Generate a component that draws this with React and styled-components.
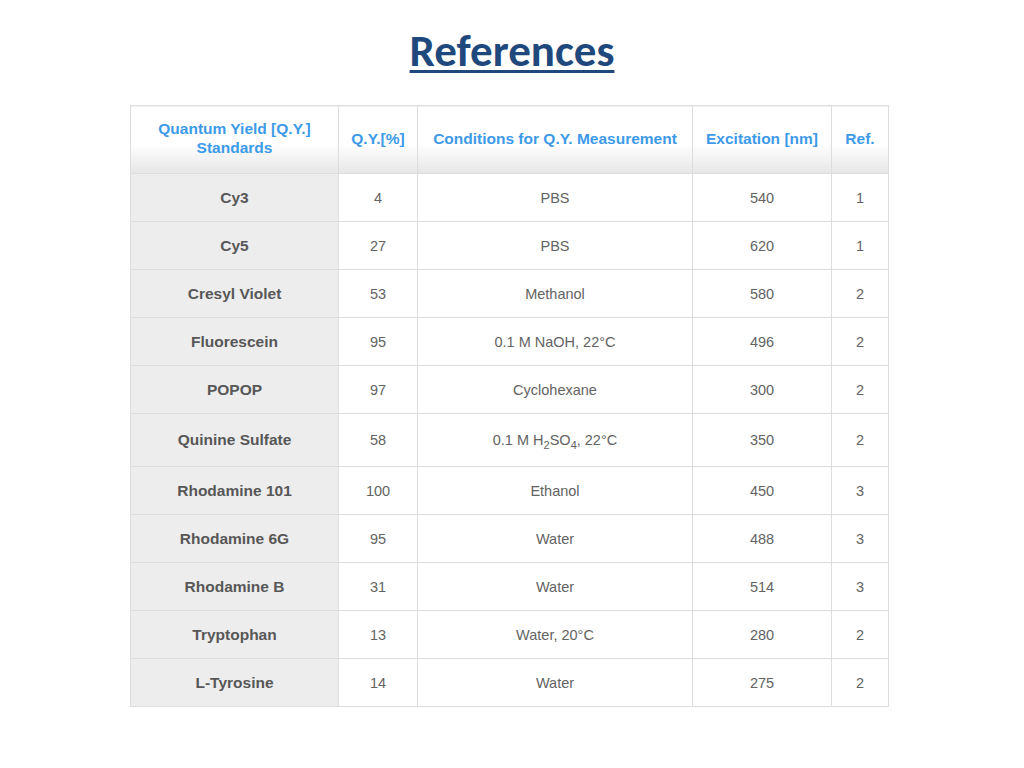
import React from 'react';
import styled, { createGlobalStyle } from 'styled-components';

const GlobalStyle = createGlobalStyle`
    html, body {
        margin: 0;
        padding: 0;
        background: #ffffff;
    }
`;

const Page = styled.div`
    width: 1024px;
    height: 768px;
    display: flex;
    flex-direction: column;
    align-items: center;
    padding-top: 24px;
    box-sizing: border-box;
`;

const Title = styled.h1`
    margin: 0 0 27px 0;
    font-family: Carlito, Lato, "Liberation Sans", sans-serif;
    font-weight: 700;
    font-size: 45px;
    line-height: 54px;
    color: #1f497d;
    text-decoration: underline;
    text-decoration-thickness: 3px;
    text-underline-offset: 4px;
`;

const Table = styled.table`
    width: 759px;
    margin-right: 5px;
    border-collapse: collapse;
    font-family: "Liberation Sans", Arial, sans-serif;
    color: #555555;
    table-layout: fixed;
`;

const HeadCell = styled.th`
    box-sizing: border-box;
    height: 68px;
    padding: 0 ${p => p.pad}px 3px;
    border: 1px solid #dddddd;
    background: linear-gradient(#ffffff 0%, #ffffff 55%, #e6e6e6 100%);
    color: #3d9ae8;
    font-size: 15.5px;
    font-weight: 700;
    line-height: 19px;
    text-align: center;
`;

const Row = styled.tr`
    height: ${p => (p.tall ? 53 : 48)}px;
`;

const Cell = styled.td`
    box-sizing: border-box;
    border: 1px solid #dddddd;
    text-align: center;
    padding: 0 6px;
    background: ${p => (p.first ? '#ededed' : '#ffffff')};
    font-weight: ${p => (p.first ? 700 : 400)};
    font-size: ${p => (p.first ? 15.5 : 14.5)}px;
    color: ${p => (p.first ? '#575757' : '#636363')};
`;

const Sub = styled.sub`
    font-size: 11px;
    line-height: 0;
`;

const cols = [208, 79, 275, 139, 57];

const rows = [
    ['Cy3', '4', 'PBS', '540', '1'],
    ['Cy5', '27', 'PBS', '620', '1'],
    ['Cresyl Violet', '53', 'Methanol', '580', '2'],
    ['Fluorescein', '95', '0.1 M NaOH, 22°C', '496', '2'],
    ['POPOP', '97', 'Cyclohexane', '300', '2'],
    ['Quinine Sulfate', '58', <>0.1 M H<Sub>2</Sub>SO<Sub>4</Sub>, 22°C</>, '350', '2', true],
    ['Rhodamine 101', '100', 'Ethanol', '450', '3'],
    ['Rhodamine 6G', '95', 'Water', '488', '3'],
    ['Rhodamine B', '31', 'Water', '514', '3'],
    ['Tryptophan', '13', 'Water, 20°C', '280', '2'],
    ['L-Tyrosine', '14', 'Water', '275', '2'],
];

const App = () => (
    <Page>
        <GlobalStyle />
        <Title>References</Title>
        <Table>
            <colgroup>
                {cols.map((w, i) => <col key={i} style={{ width: w }} />)}
            </colgroup>
            <thead>
                <tr>
                    <HeadCell pad={22}>Quantum Yield [Q.Y.] Standards</HeadCell>
                    <HeadCell pad={2}>Q.Y.[%]</HeadCell>
                    <HeadCell pad={4}>Conditions for Q.Y. Measurement</HeadCell>
                    <HeadCell pad={4}>Excitation [nm]</HeadCell>
                    <HeadCell pad={2}>Ref.</HeadCell>
                </tr>
            </thead>
            <tbody>
                {rows.map(r => (
                    <Row key={r[0]} tall={r[5] ? 1 : 0}>
                        <Cell first>{r[0]}</Cell>
                        <Cell>{r[1]}</Cell>
                        <Cell>{r[2]}</Cell>
                        <Cell>{r[3]}</Cell>
                        <Cell>{r[4]}</Cell>
                    </Row>
                ))}
            </tbody>
        </Table>
    </Page>
);

export default App;
